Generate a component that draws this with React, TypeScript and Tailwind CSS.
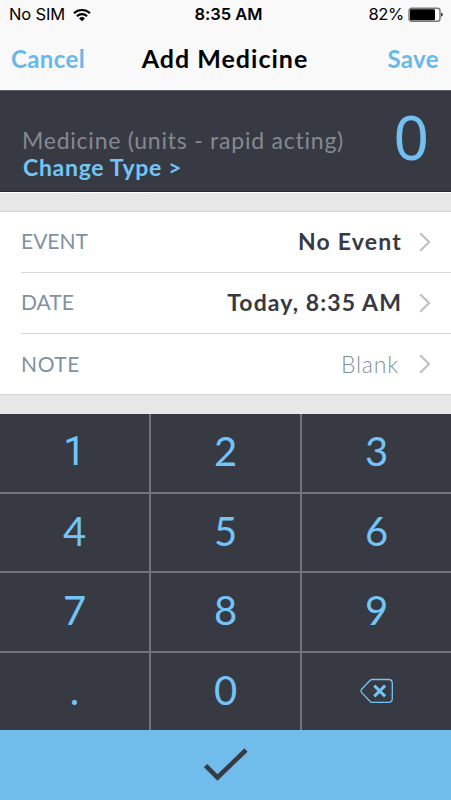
import { useState } from 'react';

const KEYS = ['1', '2', '3', '4', '5', '6', '7', '8', '9', '.', '0', 'del'];

function WifiIcon() {
  return (
    <svg width="18" height="14" viewBox="0 0 18 14" fill="none" stroke="#000" strokeWidth="2.1">
      <path d="M1 5.2a11.6 11.6 0 0 1 16 0" />
      <path d="M3.9 8.2a7.4 7.4 0 0 1 10.2 0" />
      <path d="M6.1 10.4a4.2 4.2 0 0 1 5.8 0L9 13.3z" fill="#000" stroke="none" />
    </svg>
  );
}

function BatteryIcon() {
  return (
    <svg width="36" height="16" viewBox="0 0 36 16">
      <rect x="1" y="1.2" width="31" height="13" rx="2.5" fill="#fff" stroke="#777" strokeWidth="1.4" />
      <rect x="2" y="2.2" width="25" height="11" rx="1" fill="#000" />
      <path d="M33 5.6q1.8.4 1.8 2.1t-1.8 2.1z" fill="#333" />
    </svg>
  );
}

function Chevron() {
  return (
    <svg width="12" height="20" viewBox="0 0 12 20" fill="none" stroke="#c2c2c4" strokeWidth="2.3">
      <path d="M1.2 1.2 10 10l-8.8 8.8" />
    </svg>
  );
}

function DeleteIcon() {
  return (
    <svg className="mt-[3px]" width="34" height="26" viewBox="0 0 34 26" fill="none" stroke="#73c5f7">
      <path
        d="M12 1.5H28.5Q32.3 1.5 32.3 5.3V20.5Q32.3 24.3 28.5 24.3H12Q11 24.3 10.2 23.5L1.7 14.6Q.4 12.9 1.7 11.2L10.2 2.3Q11 1.5 12 1.5Z"
        strokeWidth="1.3"
      />
      <path d="m14.3 7.6 10.8 10.8m0-10.8L14.3 18.4" strokeWidth="2.9" />
    </svg>
  );
}

type RowProps = { label: string; labelClass: string; value: string; valueClass: string; last?: boolean };

function Row({ label, labelClass, value, valueClass, last }: RowProps) {
  return (
    <button
      className={`ml-[21px] flex items-center pr-[20px] text-left ${
        last ? 'h-[60px]' : 'h-[61px] border-b border-[#d6d6d8]'
      }`}
    >
      <span className={`text-[21px] leading-6 text-[#7f929f] ${labelClass}`}>{label}</span>
      <span className={`ml-auto text-[23px] leading-7 ${valueClass}`}>{value}</span>
      <Chevron />
    </button>
  );
}

export default function App() {
  const [amount, setAmount] = useState('0');

  function press(key: string) {
    setAmount((prev) => {
      if (key === 'del') return prev.slice(0, -1) || '0';
      if (key === '.' && prev.includes('.')) return prev;
      return prev === '0' && key !== '.' ? key : prev + key;
    });
  }

  return (
    <div className="flex h-[800px] w-[451px] flex-col overflow-hidden bg-[#e7e7e7] font-['Lato',sans-serif] [font-variant-ligatures:none]">
      <header className="h-[90px] bg-[#f9f9f9]">
        <div className="grid h-[29px] grid-cols-3 items-center pr-[7px] pl-[9px] font-['Inter',sans-serif] text-[16.5px] text-black">
          <div className="flex items-center gap-[8px]">
            <span className="tracking-[-0.15px]">No SIM</span>
            <WifiIcon />
          </div>
          <span className="pl-[4px] text-center font-semibold">8:35 AM</span>
          <div className="flex items-center justify-end gap-[4px]">
            <span className="tracking-[-0.3px]">82%</span>
            <BatteryIcon />
          </div>
        </div>
        <div className="grid h-[60px] grid-cols-[1fr_auto_1fr] items-center pr-[12px] pl-[11px] text-[24px] font-bold">
          <button className="text-left tracking-[0.4px] text-[#67b9ec]">Cancel</button>
          <h1 className="text-[25px] tracking-[1px] text-black">Add Medicine</h1>
          <button className="text-right tracking-[0.4px] text-[#67b9ec]">Save</button>
        </div>
      </header>

      <section className="flex h-[102px] justify-between border-y border-b-[#24262e] border-t-[#5c5e66] bg-[#373a43] pr-[22px] pl-[22px]">
        <div className="pt-[36px]">
          <p className="text-[23px] leading-[27px] tracking-[0.77px] text-[#85898e]">Medicine (units - rapid acting)</p>
          <button className="block pl-px text-[23px] leading-[26px] font-bold tracking-[0.7px] text-[#73c5f7]">
            Change Type &gt;
          </button>
        </div>
        <span className="pt-[7px] font-['Noto_Sans',sans-serif] text-[62px] leading-[76px] text-[#73c0f0]">{amount}</span>
      </section>

      <div className="h-[19px] border-t border-white" />

      <section className="flex h-[184px] flex-col border-y border-[#d3d3d3] bg-white">
        <Row
          label="EVENT"
          labelClass="pb-[2px]"
          value="No Event"
          valueClass="mr-[17px] pb-[2px] font-bold tracking-[1.2px] text-[#373a43]"
        />
        <Row
          label="DATE"
          labelClass="pb-[2px]"
          value="Today, 8:35 AM"
          valueClass="mr-[17px] pb-[2px] font-bold tracking-[1.1px] text-[#373a43]"
        />
        <Row
          label="NOTE"
          labelClass="tracking-[0.6px]"
          value="Blank"
          valueClass="mr-[20px] pb-px font-light tracking-[0.8px] text-[#7f929f]"
          last
        />
      </section>

      <div className="h-[19px]" />

      <section className="grid h-[316px] grid-cols-3 grid-rows-[78px_77px_78px_77px] gap-[2px] bg-[#737678]">
        {KEYS.map((key) => (
          <button
            key={key}
            onClick={() => press(key)}
            className={`flex items-center justify-center bg-[#373a43] pb-[4px] text-[40px] leading-[48px] text-[#73c5f7] ${
              key === '1' ? "pt-px font-['Roboto',sans-serif]" : ''
            }`}
          >
            {key === 'del' ? <DeleteIcon /> : key}
          </button>
        ))}
      </section>

      <button className="flex h-[70px] items-center justify-center bg-[#70bcea]">
        <svg width="44" height="34" viewBox="0 0 44 34" fill="none" stroke="#373a43" strokeWidth="4.6">
          <path d="M1.6 17.5 13.5 29.5 42 2" />
        </svg>
      </button>
    </div>
  );
}
